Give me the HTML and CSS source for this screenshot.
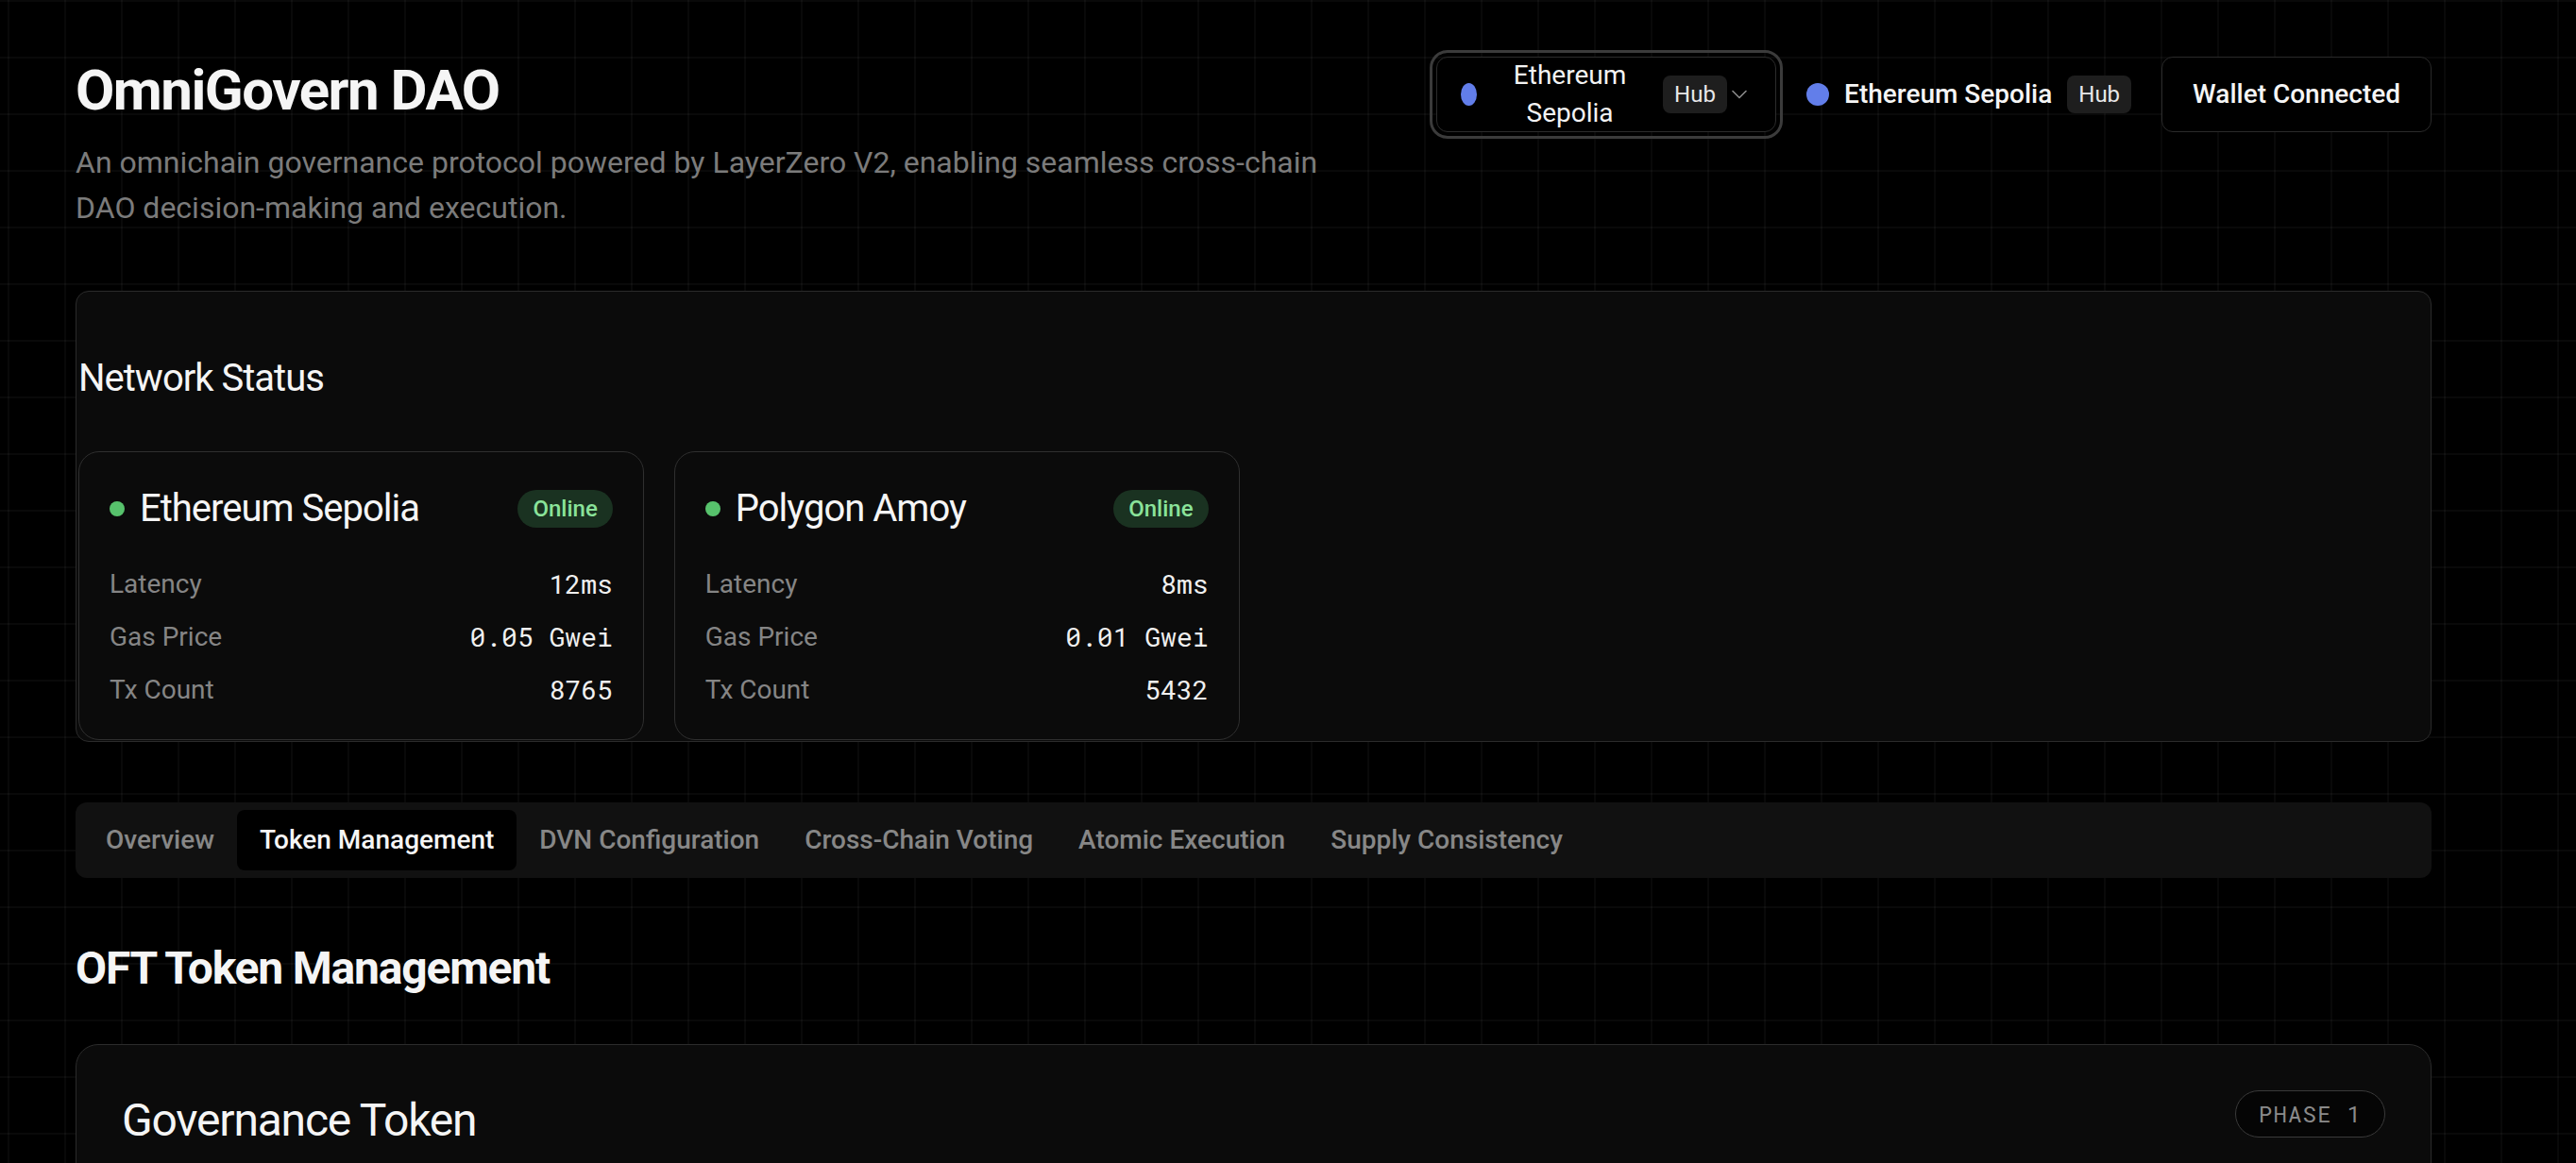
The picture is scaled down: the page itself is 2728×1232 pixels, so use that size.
FILE: index.html
```html
<!DOCTYPE html>
<html lang="en">
<head>
<meta charset="utf-8">
<title>OmniGovern DAO</title>
<link rel="stylesheet" href="styles.css">
</head>
<body>
<div class="page">
  <header class="header">
    <div class="brand">
      <h1 class="title">OmniGovern DAO</h1>
      <p class="subtitle">An omnichain governance protocol powered by LayerZero V2, enabling seamless cross-chain DAO decision-making and execution.</p>
    </div>
    <div class="controls">
      <div class="select">
        <span class="dot dot-eth dot-squeezed"></span>
        <span class="select-text">Ethereum Sepolia</span>
        <span class="hub">Hub</span>
        <svg class="chevron" width="16" height="10" viewBox="0 0 16 10"><polyline points="1,1.5 8,8.5 15,1.5" fill="none" stroke="#8a8a8a" stroke-width="1.6" stroke-linecap="round" stroke-linejoin="round"/></svg>
      </div>
      <div class="current">
        <span class="dot dot-eth"></span>
        <span class="current-name">Ethereum Sepolia</span>
        <span class="hub">Hub</span>
      </div>
      <button class="wallet">Wallet Connected</button>
    </div>
  </header>

  <section class="net-card">
    <h2 class="net-title">Network Status</h2>
    <div class="chain-grid">
      <div class="chain">
        <div class="chain-head">
          <div class="chain-name"><span class="dot-green"></span>Ethereum Sepolia</div>
          <span class="online">Online</span>
        </div>
        <div class="rows">
          <div class="row"><span class="k">Latency</span><span class="v">12ms</span></div>
          <div class="row"><span class="k">Gas Price</span><span class="v">0.05 Gwei</span></div>
          <div class="row"><span class="k">Tx Count</span><span class="v">8765</span></div>
        </div>
      </div>
      <div class="chain">
        <div class="chain-head">
          <div class="chain-name"><span class="dot-green"></span>Polygon Amoy</div>
          <span class="online">Online</span>
        </div>
        <div class="rows">
          <div class="row"><span class="k">Latency</span><span class="v">8ms</span></div>
          <div class="row"><span class="k">Gas Price</span><span class="v">0.01 Gwei</span></div>
          <div class="row"><span class="k">Tx Count</span><span class="v">5432</span></div>
        </div>
      </div>
    </div>
  </section>

  <nav class="tabs">
    <span class="tab">Overview</span>
    <span class="tab active">Token Management</span>
    <span class="tab">DVN Configuration</span>
    <span class="tab">Cross-Chain Voting</span>
    <span class="tab">Atomic Execution</span>
    <span class="tab">Supply Consistency</span>
  </nav>

  <h2 class="section-title">OFT Token Management</h2>

  <section class="gov-card">
    <div class="gov-head">
      <h3 class="gov-title">Governance Token</h3>
      <span class="phase">PHASE 1</span>
    </div>
  </section>
</div>
</body>
</html>
```

FILE: styles.css
```css
* {
  box-sizing: border-box;
  margin: 0;
  padding: 0;
}

html,
body {
  background: #000;
}

body {
  font-family: Roboto, "Liberation Sans", Arial, sans-serif;
  color: #f3f3f3;
  min-height: 1232px;
  overflow: hidden;
  background-color: #000;
  background-image:
    linear-gradient(to right, rgba(255, 255, 255, 0.035) 2px, transparent 2px),
    linear-gradient(to bottom, rgba(255, 255, 255, 0.035) 2px, transparent 2px);
  background-size: 60px 60px;
  background-position: 8px 0;
}

.page {
  width: 2495px;
  margin-left: 80px;
  padding-top: 60px;
}

/* Header */
.header {
  display: flex;
  justify-content: space-between;
  align-items: flex-start;
}

.brand {
  max-width: 1344px;
}

.title {
  font-size: 60px;
  line-height: 72px;
  font-weight: 700;
  letter-spacing: -0.025em;
  color: #f5f5f5;
}

.subtitle {
  margin-top: 16px;
  font-size: 32px;
  line-height: 48px;
  color: #7b7b7b;
}

.controls {
  display: flex;
  align-items: center;
  gap: 32px;
  height: 80px;
}

.dot {
  display: inline-block;
  width: 24px;
  height: 24px;
  border-radius: 50%;
  flex: none;
}

.dot-eth {
  background: #627eea;
}

.dot-squeezed {
  width: 17px;
}

.select {
  display: flex;
  align-items: center;
  width: 360px;
  height: 80px;
  padding-left: 25px;
  border: 1px solid #2c2c2c;
  border-radius: 12px;
  outline: 3px solid #3b3b3b;
  outline-offset: 4px;
  background: #000;
}

.select-text {
  width: 165px;
  margin: 0 16px;
  text-align: center;
  font-size: 28px;
  line-height: 40px;
  color: #f3f3f3;
}

.chevron {
  margin-left: 5px;
  flex: none;
}

.hub {
  display: inline-block;
  flex: none;
  padding: 4px 12px;
  font-size: 24px;
  line-height: 32px;
  border-radius: 8px;
  background: #1e1e1e;
  color: #e8e8e8;
}

.current {
  display: flex;
  align-items: center;
  gap: 16px;
}

.current-name {
  font-size: 28px;
  line-height: 40px;
  font-weight: 500;
  color: #f5f5f5;
}

.wallet {
  height: 80px;
  padding: 0 32px;
  border: 1px solid #2a2a2a;
  border-radius: 12px;
  background: #000;
  color: #f5f5f5;
  font-family: inherit;
  font-size: 28px;
  line-height: 40px;
  font-weight: 500;
}

/* Network status */
.net-card {
  margin-top: 64px;
  border: 1px solid #2b2b2b;
  border-radius: 14px;
  background: #0b0b0b;
  padding: 72px 0 1px 2px;
}

.net-title {
  font-size: 40px;
  line-height: 40px;
  font-weight: 400;
  letter-spacing: -0.025em;
  color: #f5f5f5;
}

.chain-grid {
  margin-top: 57px;
  display: grid;
  grid-template-columns: repeat(4, 1fr);
  gap: 32px;
}

.chain {
  border: 1px solid #2f2f2f;
  border-radius: 22px;
  background: #0b0b0b;
  padding: 32px;
}

.chain-head {
  display: flex;
  justify-content: space-between;
  align-items: center;
  height: 56px;
  margin-bottom: 32px;
}

.chain-name {
  display: flex;
  align-items: center;
  gap: 16px;
  font-size: 40px;
  line-height: 56px;
  letter-spacing: -0.025em;
  color: #f5f5f5;
}

.dot-green {
  width: 16px;
  height: 16px;
  border-radius: 50%;
  background: #57c26c;
  flex: none;
}

.online {
  padding: 0 16px;
  font-size: 24px;
  line-height: 40px;
  font-weight: 500;
  border-radius: 999px;
  background: #1a3221;
  color: #8ae39a;
}

.rows {
  display: flex;
  flex-direction: column;
  gap: 16px;
}

.row {
  display: flex;
  justify-content: space-between;
  font-size: 28px;
  line-height: 40px;
}

.row .k {
  color: #858585;
}

.row .v {
  font-family: "Roboto Mono", "DejaVu Sans Mono", monospace;
  color: #f0f0f0;
}

/* Tabs */
.tabs {
  margin-top: 64px;
  display: flex;
  height: 80px;
  padding: 8px;
  border-radius: 12px;
  background: #111111;
}

.tab {
  padding: 12px 24px;
  font-size: 28px;
  line-height: 40px;
  font-weight: 500;
  color: #878787;
  border-radius: 8px;
}

.tab.active {
  background: #000;
  color: #f5f5f5;
}

/* Token management */
.section-title {
  margin-top: 64px;
  font-size: 48px;
  line-height: 64px;
  font-weight: 700;
  letter-spacing: -0.025em;
  color: #f5f5f5;
}

.gov-card {
  margin-top: 48px;
  min-height: 400px;
  border: 1px solid #2b2b2b;
  border-radius: 24px;
  background: #0b0b0b;
  padding: 48px;
}

.gov-head {
  display: flex;
  justify-content: space-between;
  align-items: flex-start;
}

.gov-title {
  font-size: 48px;
  line-height: 64px;
  font-weight: 400;
  letter-spacing: -0.025em;
  color: #f5f5f5;
}

.phase {
  padding: 8px 24px;
  font-family: "Roboto Mono", "DejaVu Sans Mono", monospace;
  font-size: 24px;
  line-height: 32px;
  letter-spacing: 0.05em;
  color: #8a8a8a;
  border: 1px solid #3a3a3a;
  border-radius: 999px;
  background: #050505;
}
```
